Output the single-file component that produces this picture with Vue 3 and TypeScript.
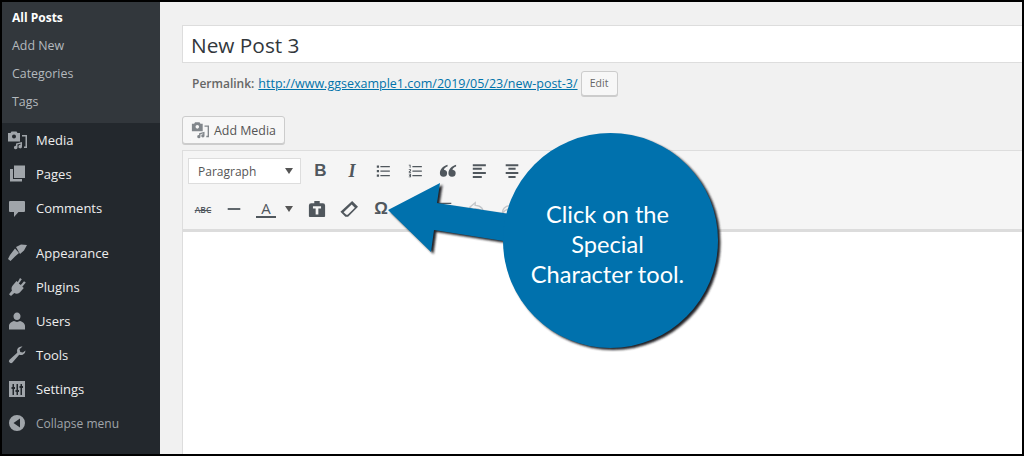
<script setup lang="ts">
const subItems = ['Add New', 'Categories', 'Tags']
</script>

<template>
  <div class="frame">
    <aside class="sidebar">
      <div class="submenu">
        <a class="sub current">All Posts</a>
        <a v-for="s in subItems" :key="s" class="sub">{{ s }}</a>
      </div>
      <div class="group first">
        <a class="item">
          <svg class="ico" viewBox="0 0 20 20" fill-rule="evenodd"><path d="M1 3h2.500l1-1.500h5l1 1.500H13v8.500H1zM7 4.500a2 2 0 1 0 0 4 2 2 0 0 0 0-4zM15 5h5v13h-3v-1.500h1.500V6.500H15zM9 13.500l6-1.500v4.500a1.800 1.800 0 1 1-1.500-1.700v-1l-3 .8v2.900a1.800 1.800 0 1 1-1.500-1.800z" /></svg>
          <span>Media</span>
        </a>
        <a class="item">
          <svg class="ico" viewBox="0 0 20 20"><path d="M7 1.500h11v12.500H7zM3 5h3v10h9v2.500H3z" /></svg>
          <span>Pages</span>
        </a>
        <a class="item">
          <svg class="ico" viewBox="0 0 20 20"><path d="M3 3h14q1 0 1 1v9q0 1-1 1h-5.500L7 19v-5H3q-1 0-1-1V4q0-1 1-1z" /></svg>
          <span>Comments</span>
        </a>
      </div>
      <div class="group">
        <a class="item">
          <svg class="ico" viewBox="0 0 20 20"><path d="M9 4l5-2.500 6 .5-3 5.500-4 3.500zM8 5.500l4 4.500-4 3.500-4.500 4.500L1 16l2-4z" /></svg>
          <span>Appearance</span>
        </a>
        <a class="item">
          <svg class="ico" viewBox="0 0 20 20"><path d="M13 1l1.800 1.200-3 4.300 2 1.500 3.200-3.800 1.800 1.300-3.500 4.300 1.500 1.200-4 4.500c-2 1.500-4 1.500-5.500.5L4 19 2 17.300l3-3.800c-.8-1.500-.6-3.500.7-5L9.500 4l1.300 1z" /></svg>
          <span>Plugins</span>
        </a>
        <a class="item">
          <svg class="ico" viewBox="0 0 20 20"><path d="M10 1.500a3.500 3.500 0 0 1 3.500 3.800c0 2.200-1.300 3.700-3.500 3.700S6.500 7.500 6.500 5.300A3.500 3.500 0 0 1 10 1.500zM7 10l3 1 3-1c2.500.5 5 2.500 5 5v3.500H2V15c0-2.500 2.500-4.500 5-5z" /></svg>
          <span>Users</span>
        </a>
        <a class="item">
          <svg class="ico" viewBox="0 0 20 20"><path d="M18.500 5.500a4.700 4.700 0 0 1-6.300 4.300L5.500 17.500a2 2 0 0 1-3-2.800l7.700-6.900A4.700 4.700 0 0 1 15.500 1.500l-3 2.800.8 2.600 2.500.5z" /></svg>
          <span>Tools</span>
        </a>
        <a class="item">
          <svg class="ico" viewBox="0 0 20 20" fill-rule="evenodd"><path d="M2 2h16v16H2zM5.500 5v3H4.500v2h1v6H7v-6h1V8H7V5zM9.500 5v6h-1v2h1v3H11v-3h1v-2h-1V5zM13.500 5v2h-1v2h1v7H15V9h1V7h-1V5z" /></svg>
          <span>Settings</span>
        </a>
        <a class="item collapse">
          <svg class="ico" viewBox="0 0 20 20" fill-rule="evenodd"><path d="M10 2a8 8 0 1 1 0 16 8 8 0 0 1 0-16zM13 5.500L6.500 10l6.500 4.500z" /></svg>
          <span>Collapse menu</span>
        </a>
      </div>
    </aside>

    <main class="main">
      <div class="title-box">New Post 3</div>
      <div class="permalink">
        <strong>Permalink:</strong>
        <a class="link">http://www.ggsexample1.com/2019/05/23/new-post-3/</a>
        <span class="edit">Edit</span>
      </div>
      <div class="media-row">
        <span class="media-btn">
          <svg class="media-ico" viewBox="0 0 20 20" fill-rule="evenodd"><path d="M1 3h2.500l1-1.500h5l1 1.500H13v8.500H1zM7 4.500a2 2 0 1 0 0 4 2 2 0 0 0 0-4zM15 5h5v13h-3v-1.500h1.500V6.500H15zM9 13.500l6-1.500v4.500a1.800 1.800 0 1 1-1.500-1.700v-1l-3 .8v2.900a1.800 1.800 0 1 1-1.500-1.800z" /></svg>
          Add Media
        </span>
      </div>
      <section class="editor">
        <div class="toolbar">
          <div class="row">
            <div class="select"><span>Paragraph</span><i class="caret"></i></div>
            <b class="tb bold">B</b>
            <i class="tb ital">I</i>
            <svg class="tb-svg" viewBox="0 0 20 20"><path d="M2 4h2.500v2.500H2zM6 4.500h10.500v1.300H6zM2 9h2.500v2.500H2zM6 9.500h10.500v1.300H6zM2 14h2.500v2.500H2zM6 14.500h10.500v1.300H6z" /></svg>
            <svg class="tb-svg" viewBox="0 0 20 20"><path d="M6 4.500h10.500v1.300H6zM6 9.500h10.500v1.300H6zM6 14.500h10.500v1.300H6zM2 3h2v3.500H3V4H2zM2 8h2.500v2L3 11h1.500v1H2v-1.500l1.500-1V9H2zM2 13h2.500v4H2v-1h1.500v-.5h-1v-1h1V14H2z" /></svg>
            <svg class="tb-svg" viewBox="0 0 20 20"><path d="M9.500 3C5 4.500 1 7.500 1 12.500a4 4 0 1 0 4.500-4c0-1.200 1.800-2.800 4-3.500zM19 3c-4.500 1.500-8.500 4.500-8.500 9.500a4 4 0 1 0 4.500-4c0-1.200 1.800-2.800 4-3.500z" /></svg>
            <svg class="tb-svg" viewBox="0 0 20 20"><path d="M2 2.500h14.500v2.200H2zM2 6.500h10v2.200H2zM2 11h14.500v2.200H2zM2 15.500h10v2.200H2z" /></svg>
            <svg class="tb-svg" viewBox="0 0 20 20"><path d="M3 2.500h14v2.200H3zM6 6.500h8v2.200H6zM3 11h14v2.200H3zM6 15.500h8v2.200H6z" /></svg>
          </div>
          <div class="row row2">
            <span class="tb abc">ABC</span>
            <svg class="tb-svg" viewBox="0 0 20 20"><path d="M3 9h14v2H3z" /></svg>
            <span class="color">
              <span class="a">A</span>
              <i class="caret small"></i>
            </span>
            <svg class="tb-svg paste" viewBox="0 0 20 20" fill-rule="evenodd"><path d="M7 1h6v2.500h3.500q2.500 0 2.500 2.500v12q0 1-2.500 1h-13Q1 19 1 18V6q0-2.500 2.500-2.500H7zM5.500 7v2.500h3V16h3V9.500h3V7z" /></svg>
            <svg class="tb-svg eraser" viewBox="0 0 20 20" fill-rule="evenodd"><path d="M13.500 1L20 7.500 9 18.500H6L0.500 13zM13 5L4 13.500l3 3h1.500l8-8z" /></svg>
            <span class="tb omega">Ω</span>
            <svg class="tb-svg" viewBox="0 0 20 20"><path d="M2 3h15v1.500H2zM9 8h8v1.500H9z" /></svg>
            <svg class="tb-svg" viewBox="0 0 20 20"><path d="M2 3h15v1.500H2zM9 3h3v1.500H9z" /></svg>
            <svg class="tb-svg outline" viewBox="0 0 20 20"><path d="M8 3 2 8l6 5v-3c5 0 8 1.500 9 6 1-5-2-10-9-10z" /></svg>
            <svg class="tb-svg outline" viewBox="0 0 20 20"><path d="M12 3l6 5-6 5v-3c-5 0-8 1.500-9 6-1-5 2-10 9-10z" /></svg>
          </div>
        </div>
        <div class="canvas"></div>
      </section>
    </main>

    <svg class="callout-svg" viewBox="0 0 1024 456" width="1024" height="456" aria-hidden="true">
      <defs>
        <filter id="sh" x="-10%" y="-10%" width="120%" height="120%">
          <feGaussianBlur stdDeviation="0.900" />
        </filter>
      </defs>
      <g filter="url(#sh)" fill="#232326" transform="translate(2.500 2)">
        <path d="M388 210 440 183 437 203 510 214 510 242 434 230 431 252Z" />
        <circle cx="610.500" cy="240.500" r="107.500" />
      </g>
      <path fill="#0071ad" d="M388 210 440 183 437 203 510 214 510 242 434 230 431 252Z" />
      <circle fill="#0071ad" cx="610.500" cy="240.500" r="107.500" />
    </svg>
    <div class="callout-text">Click on the<br />Special<br />Character tool.</div>
  </div>
</template>

<style>
html, body { margin: 0; padding: 0; background: #000; }
</style>

<style scoped>
.frame {
  position: relative;
  box-sizing: border-box;
  width: 1024px;
  height: 456px;
  border: 2px solid #000;
  display: flex;
  overflow: hidden;
  background: #f1f1f1;
  font-family: "Open Sans", sans-serif;
}
.sidebar {
  width: 158px;
  flex: none;
  background: #23282d;
  color: #eee;
  font-size: 13px;
}
.submenu {
  background: #32373c;
  height: 121px;
  box-sizing: border-box;
  padding-top: 2px;
}
.sub {
  display: block;
  height: 28px;
  line-height: 28px;
  padding-left: 10px;
  font-size: 12.4px;
  color: #b4b9be;
}
.sub.current { color: #fff; font-weight: 700; font-size: 12px; }
.group { padding-bottom: 11px; }
.item {
  display: flex;
  align-items: center;
  height: 34px;
  color: #eee;
}
.item span { margin-left: 9px; }
.ico {
  width: 20px;
  height: 20px;
  margin-left: 5px;
  fill: #a0a5aa;
  flex: none;
}
.collapse { color: #a0a5aa; font-size: 12px; }
.main {
  flex: 1;
  min-width: 0;
  padding: 23px 0 0 22px;
  margin-right: -10px;
  display: flex;
  flex-direction: column;
  color: #444;
}
.title-box {
  box-sizing: border-box;
  height: 38px;
  border: 1px solid #ddd;
  background: #fff;
  line-height: 38px;
  padding-left: 8px;
  font-size: 20.8px;
  color: #32373c;
}
.permalink {
  display: flex;
  align-items: center;
  height: 25px;
  margin-top: 8px;
  padding-left: 10px;
  font-size: 12.5px;
  color: #666;
}
.permalink strong { margin-right: 4px; font-weight: 600; font-size: 12px; }
.link { color: #0073aa; text-decoration: underline; }
.edit {
  box-sizing: border-box;
  height: 25px;
  width: 37px;
  text-align: center;
  line-height: 22px;
  margin-left: 3px;
  font-size: 10.5px;
  border: 1px solid #ccc;
  border-radius: 3px;
  color: #666;
  background: #f7f7f7;
  box-shadow: 0 1px 0 #ccc;
}
.media-row { margin-top: 20px; height: 28px; }
.media-btn {
  box-sizing: border-box;
  display: inline-flex;
  align-items: center;
  width: 103px;
  height: 28px;
  padding-left: 8px;
  font-size: 12.4px;
  color: #555;
  background: #f7f7f7;
  border: 1px solid #ccc;
  border-radius: 3px;
  box-shadow: 0 1px 0 #ccc;
}
.media-ico { width: 18px; height: 18px; fill: #82878c; margin-right: 5px; }
.editor {
  margin-top: 6px;
  flex: 1;
  border: 1px solid #ddd;
  border-bottom: 0;
  background: #fff;
  display: flex;
  flex-direction: column;
}
.toolbar {
  height: 81px;
  box-sizing: border-box;
  background: #f5f5f5;
  border-bottom: 3px solid #dcdcdc;
  padding: 6px 0 0 5px;
}
.row { display: flex; align-items: center; height: 28px; color: #50575d; }
.row2 { margin-top: 10px; }
.select {
  box-sizing: border-box;
  width: 113px;
  height: 26px;
  border: 1px solid #ddd;
  background: #fff;
  display: flex;
  align-items: center;
  justify-content: space-between;
  padding: 0 7px 0 9px;
  font-size: 12px;
  color: #555;
  margin-right: 4px;
}
.caret {
  width: 0;
  height: 0;
  border-left: 4px solid transparent;
  border-right: 4px solid transparent;
  border-top: 6px solid #555;
}
.caret.small { margin-left: 9px; }
.tb {
  width: 32px;
  text-align: center;
  flex: none;
}
.bold { font: 700 17px "Liberation Sans", sans-serif; width: 31px; }
.ital { font: italic 700 18px "Liberation Serif", serif; }
.tb-svg { width: 18px; height: 18px; padding: 0 7px; fill: #50575d; flex: none; }
.abc { font-size: 8.5px; font-weight: 600; text-decoration: line-through; width: 30px; }
.color { display: flex; align-items: center; width: 51px; padding-left: 6px; box-sizing: border-box; }
.a {
  display: inline-block;
  width: 20px;
  text-align: center;
  font-size: 15px;
  line-height: 16px;
  border-bottom: 2px solid #50575d;
}
.omega { font: 700 17px "Liberation Sans", sans-serif; width: 32px; }
.outline { fill: none; stroke: #c4c7ca; stroke-width: 1.6; }
.canvas { flex: 1; background: #fff; }
.callout-svg {
  position: absolute;
  left: -2px;
  top: -2px;
  pointer-events: none;
}
.callout-text {
  position: absolute;
  left: 503px;
  top: 197px;
  width: 205px;
  text-align: center;
  font: 23.6px/30px Lato, sans-serif;
  color: #fff;
}
</style>
